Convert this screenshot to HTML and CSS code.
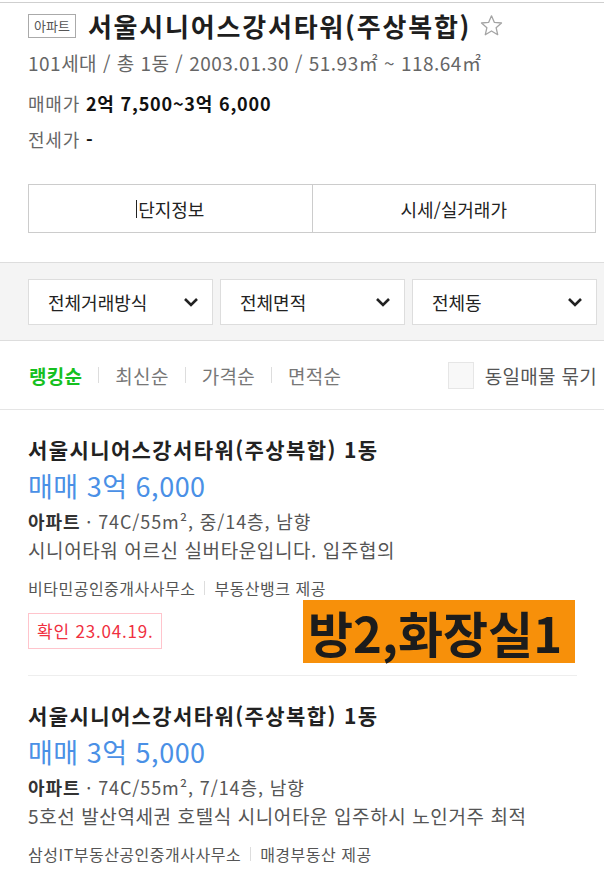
FILE: index.html
```html
<!DOCTYPE html>
<html lang="ko">
<head>
  <meta charset="UTF-8" />
  <meta name="viewport" content="width=device-width, initial-scale=1.0">
  <title>서울시니어스강서타워(주상복합)</title>
  <link rel="stylesheet" href="styles.css">
</head>
<body>
  <div class="complex">
    <div class="complex-head">
      <span class="badge">아파트</span>
      <h1 class="complex-name">서울시니어스강서타워(주상복합)</h1>
      <svg class="star" width="25" height="24" viewBox="0 0 24 24">
        <path d="M12 1.8l2.9 6.6 7.1.6-5.4 4.7 1.6 7-6.2-3.7-6.2 3.7 1.6-7L2 9l7.1-.6z" fill="none" stroke="#a4a4a4" stroke-width="1.3" stroke-linejoin="round"/>
      </svg>
    </div>
    <div class="complex-meta">101세대 / 총 1동 / 2003.01.30 / 51.93㎡ ~ 118.64㎡</div>
    <div class="complex-price">매매가 <b>2억 7,500~3억 6,000</b></div>
    <div class="complex-price rent">전세가 <b>-</b></div>

    <div class="tabs">
      <div class="tab"><span class="caret"></span>단지정보</div>
      <div class="tab">시세/실거래가</div>
    </div>
  </div>

  <div class="filters">
    <div class="select">전체거래방식 <svg width="16" height="10" viewBox="0 0 16 10"><path d="M2 2l6 6 6-6" fill="none" stroke="#222" stroke-width="2.6"/></svg></div>
    <div class="select">전체면적 <svg width="16" height="10" viewBox="0 0 16 10"><path d="M2 2l6 6 6-6" fill="none" stroke="#222" stroke-width="2.6"/></svg></div>
    <div class="select">전체동 <svg width="16" height="10" viewBox="0 0 16 10"><path d="M2 2l6 6 6-6" fill="none" stroke="#222" stroke-width="2.6"/></svg></div>
  </div>

  <div class="sort">
    <div class="sort-list">
      <span class="sort-item on">랭킹순</span>
      <span class="sort-bar"></span>
      <span class="sort-item">최신순</span>
      <span class="sort-bar"></span>
      <span class="sort-item">가격순</span>
      <span class="sort-bar"></span>
      <span class="sort-item">면적순</span>
    </div>
    <label class="same">
      <span class="checkbox"></span>
      동일매물 묶기
    </label>
  </div>

  <div class="list">
    <div class="item">
      <div class="item-title">서울시니어스강서타워(주상복합) 1동</div>
      <div class="item-price">매매 3억 6,000</div>
      <div class="item-spec"><b>아파트</b> · 74C/55m², 중/14층, 남향</div>
      <div class="item-desc">시니어타워 어르신 실버타운입니다. 입주협의</div>
      <div class="item-agent">비타민공인중개사사무소<span class="agent-bar"></span>부동산뱅크 제공</div>
      <div class="item-tags"><span class="tag">확인 23.04.19.</span></div>
      <div class="memo">방2,화장실1</div>
    </div>
    <div class="item">
      <div class="item-title">서울시니어스강서타워(주상복합) 1동</div>
      <div class="item-price">매매 3억 5,000</div>
      <div class="item-spec"><b>아파트</b> · 74C/55m², 7/14층, 남향</div>
      <div class="item-desc">5호선 발산역세권 호텔식 시니어타운 입주하시 노인거주 최적</div>
      <div class="item-agent">삼성IT부동산공인중개사사무소<span class="agent-bar"></span>매경부동산 제공</div>
    </div>
  </div>
</body>
</html>
```

FILE: styles.css
```css
html, body {
  margin: 0;
  padding: 0;
  background: #fff;
  color: #222;
  font-family: "Noto Sans CJK KR", "Noto Sans", sans-serif;
}

.complex {
  margin-top: 2px;
  border-top: 1px solid #cfcfcf;
  padding: 0 8px 29px 28px;
}

.complex-head {
  display: flex;
  align-items: center;
  height: 30px;
  margin-top: 8px;
}

.badge {
  box-sizing: border-box;
  height: 24px;
  line-height: 22px;
  padding: 0 5px;
  border: 1px solid #aaa;
  font-size: 13px;
  color: #555;
}

.complex-name {
  margin: 0 0 0 12px;
  font-size: 26px;
  line-height: 30px;
  font-weight: bold;
  color: #1e1e1e;
  letter-spacing: 1.8px;
}

.star {
  margin-left: 8px;
}

.complex-meta {
  margin-top: 10px;
  font-size: 19px;
  line-height: 24px;
  color: #666;
  letter-spacing: 0.5px;
}

.complex-price {
  margin-top: 16px;
  font-size: 18px;
  line-height: 24px;
  color: #666;
  letter-spacing: 0.8px;
}

.complex-price.rent {
  margin-top: 12px;
}

.complex-price b {
  color: #111;
}

.tabs {
  display: flex;
  margin-top: 33px;
  border: 1px solid #ccc;
}

.tab {
  flex: 1;
  height: 47px;
  display: flex;
  align-items: center;
  justify-content: center;
  font-size: 18px;
  color: #222;
}

.tab + .tab {
  border-left: 1px solid #ccc;
}

.caret {
  width: 1px;
  height: 18px;
  background: #222;
  margin-right: 1px;
}

.filters {
  display: flex;
  gap: 7px;
  padding: 16px 7px 15px 28px;
  background: #f4f4f4;
  border-top: 1px solid #ddd;
  border-bottom: 1px solid #ddd;
}

.select {
  flex: 1;
  height: 44px;
  display: flex;
  align-items: center;
  justify-content: space-between;
  padding: 0 13px 0 19px;
  background: #fff;
  border: 1px solid #ddd;
  font-size: 18px;
  color: #222;
}

.sort {
  display: flex;
  align-items: center;
  justify-content: space-between;
  height: 68px;
  padding: 0 7px 0 29px;
  border-bottom: 1px solid #e5e5e5;
}

.sort-list {
  display: flex;
  align-items: center;
  gap: 16px;
}

.sort-item {
  font-size: 19px;
  color: #777;
  letter-spacing: 0.3px;
}

.sort-item.on {
  color: #15c020;
  font-weight: bold;
}

.sort-bar {
  width: 1px;
  height: 16px;
  background: #ddd;
}

.same {
  display: flex;
  align-items: center;
  gap: 11px;
  font-size: 19px;
  color: #555;
  letter-spacing: 0.3px;
}

.checkbox {
  width: 24px;
  height: 25px;
  background: #f8f8f8;
  border: 1px solid #e6e6e6;
}

.list {
  padding: 0 27px 0 28px;
}

.item {
  position: relative;
  padding: 26px 0 26px;
  border-bottom: 1px solid #eee;
}

.item-title {
  font-size: 21px;
  line-height: 26px;
  font-weight: bold;
  color: #222;
  letter-spacing: 1.4px;
}

.item-price {
  margin-top: 7px;
  font-size: 27px;
  line-height: 34px;
  color: #4a90e6;
  letter-spacing: 0.5px;
}

.item-spec {
  margin-top: 6px;
  font-size: 18px;
  line-height: 24px;
  color: #555;
  letter-spacing: 0.9px;
}

.item-spec b {
  color: #333;
}

.item-desc {
  margin-top: 4px;
  font-size: 19px;
  line-height: 26px;
  color: #555;
  letter-spacing: 0.6px;
}

.item-agent {
  display: flex;
  align-items: center;
  margin-top: 15px;
  font-size: 16px;
  line-height: 20px;
  color: #555;
  letter-spacing: 0.5px;
}

.agent-bar {
  width: 1px;
  height: 14px;
  background: #ddd;
  margin: 0 9px;
}

.item-tags {
  margin-top: 15px;
}

.tag {
  display: inline-block;
  box-sizing: border-box;
  height: 36px;
  line-height: 34px;
  padding: 0 8px;
  border: 1px solid #ffc4cc;
  font-size: 17px;
  color: #f0303f;
  letter-spacing: 0.8px;
}

.memo {
  position: absolute;
  left: 275px;
  top: 190px;
  width: 272px;
  height: 63px;
  background: #f7900a;
  font-size: 49px;
  line-height: 63px;
  font-weight: bold;
  color: #1c1c1c;
  padding-left: 5px;
  box-sizing: border-box;
  white-space: nowrap;
}
```
